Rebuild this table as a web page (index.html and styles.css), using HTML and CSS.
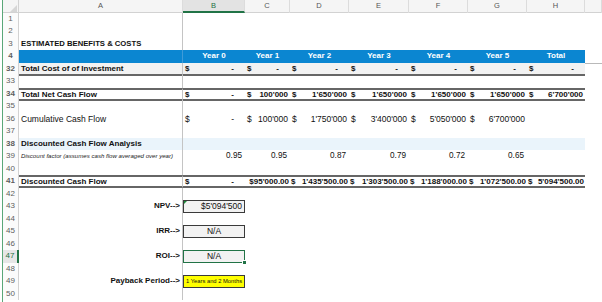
FILE: index.html
```html
<!DOCTYPE html>
<html>
<head>
<meta charset="utf-8">
<link rel="stylesheet" href="styles.css">
</head>
<body>
<div class="sheet">
  <div class="row hdr">
    <div class="corner"></div>
    <div class="ch">A</div><div class="ch sel">B</div><div class="ch">C</div><div class="ch">D</div><div class="ch">E</div><div class="ch">F</div><div class="ch">G</div><div class="ch">H</div><div class="ch"></div>
  </div>

  <div class="row"><div class="rh">1</div><div class="c a"></div></div>
  <div class="row"><div class="rh">2</div><div class="c a"></div></div>
  <div class="row"><div class="rh">3</div><div class="c a title">ESTIMATED BENEFITS &amp; COSTS</div></div>
  <div class="row years">
    <div class="rh">4</div><div class="c a"></div>
    <div class="c">Year 0</div><div class="c">Year 1</div><div class="c">Year 2</div><div class="c">Year 3</div><div class="c">Year 4</div><div class="c">Year 5</div><div class="c">Total</div><div class="c rest"></div>
  </div>
  <div class="row bold gray dbl-b">
    <div class="rh">32</div><div class="c a">Total Cost of of Investment</div>
    <div class="c acc"><span>$</span><span class="dash">-</span></div>
    <div class="c acc"><span>$</span><span class="dash">-</span></div>
    <div class="c acc"><span>$</span><span class="dash">-</span></div>
    <div class="c acc"><span>$</span><span class="dash">-</span></div>
    <div class="c acc"><span>$</span><span class="dash">-</span></div>
    <div class="c acc"><span>$</span><span class="dash">-</span></div>
    <div class="c acc"><span>$</span><span class="dash">-</span></div>
  </div>
  <div class="row"><div class="rh">33</div><div class="c a"></div></div>
  <div class="row bold dbl-t dbl-b">
    <div class="rh">34</div><div class="c a">Total Net Cash Flow</div>
    <div class="c acc"><span>$</span><span class="dash">-</span></div>
    <div class="c acc"><span>$</span><span>100'000</span></div>
    <div class="c acc"><span>$</span><span>1'650'000</span></div>
    <div class="c acc"><span>$</span><span>1'650'000</span></div>
    <div class="c acc"><span>$</span><span>1'650'000</span></div>
    <div class="c acc"><span>$</span><span>1'650'000</span></div>
    <div class="c acc"><span>$</span><span>6'700'000</span></div>
  </div>
  <div class="row"><div class="rh">35</div><div class="c a"></div></div>
  <div class="row reg">
    <div class="rh">36</div><div class="c a">Cumulative Cash Flow</div>
    <div class="c acc"><span>$</span><span class="dash">-</span></div>
    <div class="c acc"><span>$</span><span>100'000</span></div>
    <div class="c acc"><span>$</span><span>1'750'000</span></div>
    <div class="c acc"><span>$</span><span>3'400'000</span></div>
    <div class="c acc"><span>$</span><span>5'050'000</span></div>
    <div class="c acc"><span>$</span><span>6'700'000</span></div>
    <div class="c"></div>
  </div>
  <div class="row"><div class="rh">37</div><div class="c a"></div></div>
  <div class="row bold lblue">
    <div class="rh">38</div><div class="c a">Discounted Cash Flow Analysis</div>
    <div class="c"></div><div class="c"></div><div class="c"></div><div class="c"></div><div class="c"></div><div class="c"></div><div class="c"></div>
  </div>
  <div class="row factor">
    <div class="rh">39</div><div class="c a note">Discount factor (assumes cash flow averaged over year)</div>
    <div class="c num">0.95</div><div class="c num">0.95</div><div class="c num">0.87</div><div class="c num">0.79</div><div class="c num">0.72</div><div class="c num">0.65</div><div class="c"></div>
  </div>
  <div class="row"><div class="rh">40</div><div class="c a"></div></div>
  <div class="row bold dbl-t dbl-b">
    <div class="rh">41</div><div class="c a">Discounted Cash Flow</div>
    <div class="c acc"><span>$</span><span class="dash">-</span></div>
    <div class="c acc tight"><span>$95'000.00</span></div>
    <div class="c acc tight"><span>$</span><span>1'435'500.00</span></div>
    <div class="c acc tight"><span>$</span><span>1'303'500.00</span></div>
    <div class="c acc tight"><span>$</span><span>1'188'000.00</span></div>
    <div class="c acc tight"><span>$</span><span>1'072'500.00</span></div>
    <div class="c acc tight"><span>$</span><span>5'094'500.00</span></div>
  </div>
  <div class="row"><div class="rh">42</div><div class="c a"></div></div>
  <div class="row">
    <div class="rh">43</div><div class="c a lbl">NPV--&gt;</div>
    <div class="c"><div class="box right">$5'094'500<span class="tri"></span></div></div>
  </div>
  <div class="row"><div class="rh">44</div><div class="c a"></div></div>
  <div class="row">
    <div class="rh">45</div><div class="c a lbl">IRR--&gt;</div>
    <div class="c"><div class="box">N/A</div></div>
  </div>
  <div class="row"><div class="rh">46</div><div class="c a"></div></div>
  <div class="row">
    <div class="rh selrow">47</div><div class="c a lbl">ROI--&gt;</div>
    <div class="c"><div class="box selbox">N/A<span class="handle"></span></div></div>
  </div>
  <div class="row"><div class="rh">48</div><div class="c a"></div></div>
  <div class="row">
    <div class="rh">49</div><div class="c a lbl">Payback Period--&gt;</div>
    <div class="c"><div class="box yellow">1 Years and 2 Months</div></div>
  </div>
  <div class="row"><div class="rh">50</div><div class="c a"></div></div>
</div>
</body>
</html>
```
FILE: styles.css
```css
html, body {
  margin: 0;
  padding: 0;
  background: #ffffff;
}

body {
  font-family: "Liberation Sans", Arial, sans-serif;
  color: #111111;
  overflow: hidden;
}

.sheet {
  width: 599px;
  height: 302px;
  margin-left: 2px;
  border-left: 1px solid #5aa778;
  overflow: hidden;
}

.row {
  display: grid;
  grid-template-columns: 16px 164px 62px 45px 59px 60px 59px 59px 58px 1fr;
  height: 12.5px;
  line-height: 12.5px;
  font-size: 8px;
  white-space: nowrap;
}

.c {
  box-sizing: border-box;
  min-width: 0;
  overflow: visible;
  position: relative;
}

.c.a {
  border-right: 1px solid #c4c4c4;
  padding-left: 2px;
}

/* header row */
.hdr {
  background: #f5f5f5;
  box-sizing: border-box;
  border-bottom: 1px solid #d2d2d2;
}

.corner {
  position: relative;
  border-right: 1px solid #d2d2d2;
}

.corner::after {
  content: "";
  position: absolute;
  right: 1px;
  bottom: 1px;
  width: 0;
  height: 0;
  border-left: 7px solid transparent;
  border-bottom: 7px solid #d6d6d6;
}

.ch {
  box-sizing: border-box;
  text-align: center;
  font-size: 7.5px;
  color: #555555;
  border-right: 1px solid #dcdcdc;
}

.ch.sel {
  background: #e3e3e3;
  color: #1e7145;
  border-bottom: 2px solid #217346;
  line-height: 11px;
}

/* row headers */
.rh {
  box-sizing: border-box;
  text-align: center;
  font-size: 8px;
  color: #5e5e5e;
  border-right: 1px solid #d2d2d2;
  background: #fbfbfb;
}

.rh.selrow {
  color: #1e7145;
  background: #e6e6e6;
  border-right: 2px solid #217346;
}

/* row styles */
.title {
  font-weight: bold;
  font-size: 7.7px;
}

.years {
  font-weight: bold;
  color: #ffffff;
}

.years .c {
  background: #0b86d1;
  text-align: center;
  border-bottom: 1px solid #b9b9b9;
}

.years .c.a {
  border-right: 1px solid #3f9bd8;
}

.years .c.rest {
  background: #ffffff;
}

.bold {
  font-weight: bold;
}

.gray .c {
  background: #f2f2f2;
}

.lblue .c {
  background: #eaf4fb;
}

.dbl-b .c {
  border-bottom: 2px solid #666666;
}

.dbl-t .c {
  border-top: 2px solid #666666;
}

.dbl-t .c,
.dbl-b .c {
  line-height: 9px;
}

.dbl-b.gray .c {
  line-height: 11px;
}

.acc {
  display: flex;
  justify-content: space-between;
  padding: 0 2px 0 2px;
}

.acc.tight {
  padding: 0 1px;
}

.acc.tight span:only-child {
  margin-left: auto;
}

.dash {
  padding-right: 9px;
}

.reg {
  font-size: 8.5px;
}

.factor {
  font-size: 8.2px;
}

.note {
  font-style: italic;
  font-size: 6.1px;
  color: #222222;
}

.num {
  text-align: right;
  padding-right: 3px;
}

.lbl {
  text-align: right;
  font-weight: bold;
  padding-right: 2px;
}

/* result boxes */
.box {
  position: relative;
  box-sizing: border-box;
  height: 13px;
  border: 1.5px solid #3a3a3a;
  background: #f2f2f2;
  font-size: 8.5px;
  line-height: 10px;
  text-align: center;
  color: #111111;
}

.box.right {
  text-align: right;
  padding-right: 2px;
}

.box.selbox {
  border-color: #217346;
}

.box.yellow {
  background: #ffff00;
  font-size: 5.8px;
  border-color: #3a3a3a;
}

.tri {
  position: absolute;
  left: 0;
  top: 0;
  width: 0;
  height: 0;
  border-top: 3px solid #1e8a3c;
  border-right: 3px solid transparent;
}

.handle {
  position: absolute;
  right: -3px;
  bottom: -3px;
  width: 3px;
  height: 3px;
  background: #217346;
  border: 1px solid #ffffff;
}
```
